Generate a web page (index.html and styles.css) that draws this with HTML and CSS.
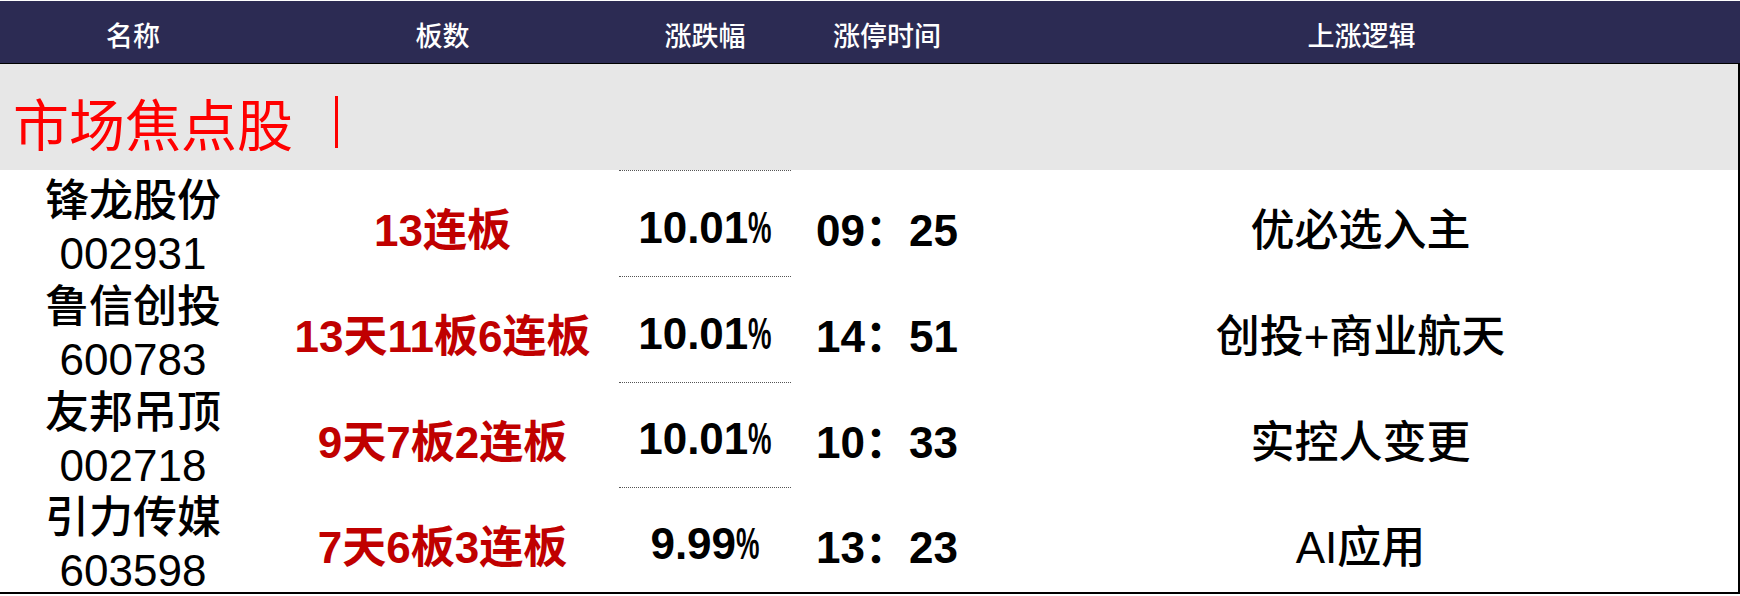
FILE: index.html
```html
<!DOCTYPE html>
<html lang="zh-CN">
<head>
<meta charset="utf-8">
<title>市场焦点股</title>
<link rel="stylesheet" href="styles.css">
</head>
<body>
<div class="sheet">
  <div class="head">
    <div class="hcell">名称</div>
    <div class="hcell">板数</div>
    <div class="hcell">涨跌幅</div>
    <div class="hcell">涨停时间</div>
    <div class="hcell">上涨逻辑</div>
  </div>
  <div class="body">
    <div class="band">
      <span class="title">市场焦点股</span><span class="bar"></span>
    </div>
    <div class="rows">
      <div class="cell name"><div class="ln">锋龙股份</div><div class="ln">002931</div></div>
      <div class="cell board">13连板</div>
      <div class="cell pctc">10.01<span class="pct">%</span></div>
      <div class="cell time">09：25</div>
      <div class="cell logic">优必选入主</div>

      <div class="cell name"><div class="ln">鲁信创投</div><div class="ln">600783</div></div>
      <div class="cell board">13天11板6连板</div>
      <div class="cell pctc">10.01<span class="pct">%</span></div>
      <div class="cell time">14：51</div>
      <div class="cell logic">创投+商业航天</div>

      <div class="cell name"><div class="ln">友邦吊顶</div><div class="ln">002718</div></div>
      <div class="cell board">9天7板2连板</div>
      <div class="cell pctc">10.01<span class="pct">%</span></div>
      <div class="cell time">10：33</div>
      <div class="cell logic">实控人变更</div>

      <div class="cell name"><div class="ln">引力传媒</div><div class="ln">603598</div></div>
      <div class="cell board">7天6板3连板</div>
      <div class="cell pctc">9.99<span class="pct">%</span></div>
      <div class="cell time">13：23</div>
      <div class="cell logic">AI应用</div>
    </div>
  </div>
</div>
</body>
</html>
```
FILE: styles.css
```css
* { box-sizing: border-box; }
html, body { margin: 0; padding: 0; background: #ffffff; }
body {
  width: 1740px;
  height: 596px;
  overflow: hidden;
  font-family: "Liberation Sans", "Noto Sans CJK SC", sans-serif;
  color: #000;
}
.sheet { padding-top: 1px; }
.head {
  display: grid;
  grid-template-columns: 266px 353px 172px 192px 1fr;
  height: 63px;
  background: #2c2b53;
  border-bottom: 1px solid #000;
}
.hcell {
  display: flex;
  align-items: center;
  justify-content: center;
  padding-top: 4px;
  color: #fff;
  font-family: "Noto Sans CJK SC", sans-serif;
  font-size: 27px;
  font-weight: 500;
}
.body {
  border-right: 2px solid #000;
  border-bottom: 2px solid #000;
}
.band {
  height: 106px;
  background: #e7e7e7;
  display: flex;
  align-items: center;
  padding: 10px 0 0 13px;
}
.title {
  color: #ff0000;
  font-family: "Noto Sans CJK SC", serif;
  font-size: 56px;
  line-height: 1;
}
.bar {
  display: inline-block;
  width: 3px;
  height: 52px;
  margin-left: 42px;
  background: #ff0000;
}
.rows {
  display: grid;
  grid-template-columns: 266px 353px 172px 192px 1fr;
  grid-template-rows: 106px 106px 105px 105px;
}
.cell {
  display: flex;
  align-items: center;
  justify-content: center;
  padding-top: 8px;
  font-size: 44px;
  white-space: nowrap;
}
.name {
  display: block;
  padding-top: 4px;
  text-align: center;
  font-weight: 500;
}
.name .ln { line-height: 53px; height: 53px; }
.board { color: #c00000; font-weight: bold; }
.pctc { font-weight: bold; border-top: 1px dotted #555; }
.pct {
  display: inline-block;
  transform: scaleX(0.6);
  transform-origin: left center;
  margin-right: -0.355em;
}
.time { font-weight: bold; }
.logic { font-weight: 500; }
```
